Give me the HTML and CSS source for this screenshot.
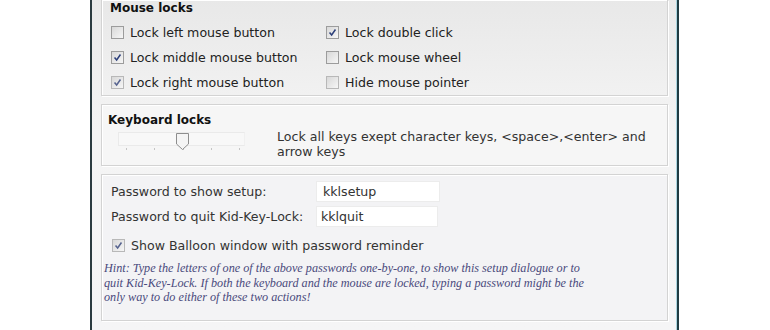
FILE: index.html
```html
<!DOCTYPE html>
<html lang="en">
<head>
  <meta charset="UTF-8">
  <title>Kid-Key-Lock Setup</title>
  <link rel="stylesheet" href="styles.css">
</head>
<body>
  <div class="window">
    <!-- Mouse locks -->
    <div class="group group-mouse">
      <div class="group-title">Mouse locks</div>
      <div class="check-grid">
        <label class="check"><span class="box"></span>Lock left mouse button</label>
        <label class="check"><span class="box checked"><svg viewBox="0 0 13 13"><path d="M3 6.5 L5.5 9.5 L10 3"/></svg></span>Lock double click</label>
        <label class="check"><span class="box checked"><svg viewBox="0 0 13 13"><path d="M3 6.5 L5.5 9.5 L10 3"/></svg></span>Lock middle mouse button</label>
        <label class="check"><span class="box"></span>Lock mouse wheel</label>
        <label class="check"><span class="box checked faded"><svg viewBox="0 0 13 13"><path d="M3 6.5 L5.5 9.5 L10 3"/></svg></span>Lock right mouse button</label>
        <label class="check"><span class="box faded"></span>Hide mouse pointer</label>
      </div>
    </div>

    <!-- Keyboard locks -->
    <div class="group group-keys">
      <div class="keys-left">
        <div class="group-title">Keyboard locks</div>
        <div class="slider">
          <div class="track"></div>
          <div class="thumb"><svg viewBox="0 0 13 17"><path d="M0.5 0.5 H12.5 V11 L6.5 16.5 L0.5 11 Z"/></svg></div>
          <div class="ticks"><span></span><span></span><span></span><span></span><span></span></div>
        </div>
      </div>
      <p class="keys-text">Lock all keys exept character keys, &lt;space&gt;,&lt;enter&gt; and arrow keys</p>
    </div>

    <!-- Passwords -->
    <div class="group group-pass">
      <div class="pass-row">
        <span class="pass-label">Password to show setup:</span>
        <input type="text" class="pass-input" value="kklsetup">
      </div>
      <div class="pass-row">
        <span class="pass-label">Password to quit Kid-Key-Lock:</span>
        <input type="text" class="pass-input narrow" value="kklquit">
      </div>
      <label class="check balloon"><span class="box checked faded"><svg viewBox="0 0 13 13"><path d="M3 6.5 L5.5 9.5 L10 3"/></svg></span>Show Balloon window with password reminder</label>
      <p class="hint">Hint: Type the letters of one of the above passwords one-by-one, to show this setup dialogue or to quit Kid-Key-Lock. If both the keyboard and the mouse are locked, typing a password might be the only way to do either of these two actions!</p>
    </div>
  </div>
</body>
</html>
```

FILE: styles.css
```css
/* Base */
* {
  box-sizing: border-box;
  margin: 0;
  padding: 0;
}
body {
  background: #fff;
  font-family: 'DejaVu Sans', Verdana, sans-serif;
  font-size: 12.6px;
  color: #222;
  overflow: hidden;
}
/* Dialog window */
.window {
  margin-left: 90px;
  width: 589px;
  height: 330px;
  border-left: 2px solid #2b3b40;
  border-right: 2px solid #1f3b42;
  background: linear-gradient(#e9e9e9, #f4f4f4 40%, #f5f5f6);
  padding: 0 9px 0 9px;
  display: flex;
  flex-direction: column;
  gap: 8px;
  box-shadow: inset -1px 0 0 #a9d4df;
}
/* Group boxes */
.group {
  border: 1px solid #d3d3d3;
  box-shadow: inset 1px 1px 0 #fff, 1px 1px 0 #fff;
}
.group-title {
  font-weight: bold;
  font-size: 12px;
  line-height: 16px;
  color: #111;
}
.group-mouse {
  border-top: none;
  height: 96px;
  padding-left: 8px;
  background: linear-gradient(#e8e8e8, #f1f1f1);
}
.check-grid {
  margin-top: 4px;
  display: grid;
  grid-template-columns: 215px 1fr;
  grid-auto-rows: 25px;
}
.check {
  display: flex;
  align-items: center;
  gap: 6px;
  padding-left: 1px;
}
.box {
  width: 13px;
  height: 13px;
  border: 1px solid #9c9c9c;
  background: linear-gradient(135deg, #d8d8d8, #f6f6f6);
  display: flex;
  align-items: center;
  justify-content: center;
}
.box svg {
  width: 11px;
  height: 11px;
  fill: none;
  stroke: #2c3f7a;
  stroke-width: 1.8;
}
.box.faded {
  border-color: #b8b8b8;
}
.box.faded svg {
  stroke: #56638f;
}
/* Keyboard group */
.group-keys {
  height: 62px;
  display: flex;
  padding: 7px 0 0 6px;
  background: #f6f6f6;
}
.keys-left {
  width: 169px;
}
.slider {
  position: relative;
  margin: 2px 0 0 10px;
  width: 127px;
  height: 24px;
}
.track {
  height: 14px;
  margin-top: 4px;
  border: 1px solid #eaeaea;
  border-right-color: #f0f0f0;
  background: #f8f8f8;
}
.thumb {
  position: absolute;
  left: 58px;
  top: 1px;
  width: 13px;
  height: 17px;
}
.thumb svg {
  width: 13px;
  height: 17px;
  fill: #f4f4f4;
  stroke: #8d8d8d;
}
.ticks {
  display: flex;
  justify-content: space-between;
  padding: 2px 5px 0 8px;
}
.ticks span {
  width: 1px;
  height: 2px;
  background: #c4c4c4;
}
.keys-text {
  margin-top: 17px;
  line-height: 15px;
  width: 385px;
  color: #333;
}
/* Password group */
.group-pass {
  height: 147px;
  padding: 5px 0 0 9px;
  background: #f3f3f5;
}
.pass-row {
  display: flex;
  align-items: center;
  height: 22px;
  margin-bottom: 3px;
}
.pass-label {
  width: 205px;
  color: #333;
}
.pass-input {
  width: 124px;
  height: 21px;
  border: 1px solid #ececec;
  background: #fff;
  font: inherit;
  color: #333;
  padding-left: 6px;
}
.pass-input.narrow {
  width: 122px;
  padding-left: 4px;
}
.balloon {
  margin-top: 10px;
  height: 16px;
  color: #333;
}
.hint {
  margin: 8px 0 0 -7px;
  font-family: 'Liberation Serif', 'Times New Roman', serif;
  font-style: italic;
  font-size: 12.2px;
  line-height: 14.5px;
  color: #4a4a7c;
  width: 490px;
}
```
